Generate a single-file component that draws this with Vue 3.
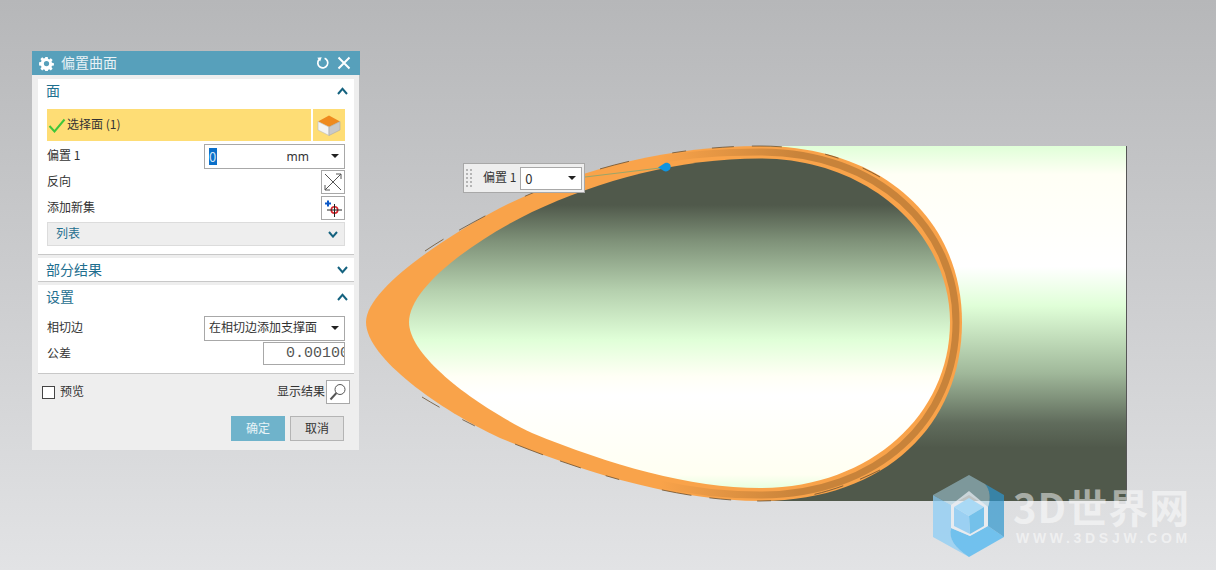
<script setup>
const outerD = 'M366 322C366 290 440 240 500 208C580 168 670 146 760 146C885 146 962 222 962 322C962 425 885 501 760 501C680 501 590 475 500 438C440 410 366 358 366 322Z'
const innerD = 'M409 322C409 290 465 245 532 212C600 180 680 158.5 760 158.5C870 158.5 950 235 950 322C950 415 870 488 760 488C690 488 610 465 532 433C480 408 409 358 409 322Z'
const ringD = 'M660 160C690 154 725 152 760 152C878 152 956 228 956 322C956 420 878 495 760 495C725 495 690 491 660 484'
const dashTop = 'M425 251C447 236 472 223 500 208C580 168 670 146 760 146C800 146 840 154 880 177'
const dashBottom = 'M880 470C840 490 800 501 760 501C680 501 590 475 500 438C470 424 445 411 422 397'
</script>

<template>
  <div class="page">
    <svg class="scene" width="1216" height="570" viewBox="0 0 1216 570">
      <defs>
        <linearGradient id="tube" gradientUnits="userSpaceOnUse" x1="0" y1="146" x2="0" y2="501">
          <stop offset="0" stop-color="#e0ffd8" />
          <stop offset="0.08" stop-color="#fffff5" />
          <stop offset="0.34" stop-color="#ffffff" />
          <stop offset="0.45" stop-color="#e0ffd8" />
          <stop offset="0.64" stop-color="#a0b89a" />
          <stop offset="0.78" stop-color="#606c5c" />
          <stop offset="0.85" stop-color="#50594b" />
          <stop offset="1" stop-color="#50594b" />
        </linearGradient>
        <linearGradient id="bore" gradientUnits="userSpaceOnUse" x1="0" y1="159" x2="0" y2="488">
          <stop offset="0" stop-color="#50594b" />
          <stop offset="0.14" stop-color="#50594b" />
          <stop offset="0.25" stop-color="#7f9279" />
          <stop offset="0.4" stop-color="#b5d0ae" />
          <stop offset="0.55" stop-color="#e0ffd8" />
          <stop offset="0.66" stop-color="#fffff5" />
          <stop offset="0.72" stop-color="#ffffff" />
          <stop offset="0.96" stop-color="#fffff2" />
          <stop offset="1" stop-color="#e8ffe0" />
        </linearGradient>
        <linearGradient id="band" gradientUnits="userSpaceOnUse" x1="660" y1="0" x2="800" y2="0">
          <stop offset="0" stop-color="#f9a34a" />
          <stop offset="1" stop-color="#c8833a" />
        </linearGradient>
      </defs>
      <rect x="760" y="146" width="366" height="355" fill="url(#tube)" />
      <rect x="1126" y="146" width="1" height="355" fill="#555" />
      <path :d="outerD" fill="#f9a34a" />
      <path :d="ringD" fill="none" stroke="url(#band)" stroke-width="7" />
      <path :d="innerD" fill="url(#bore)" />
      <path class="dashes" :d="dashTop" />
      <path class="dashes" :d="dashBottom" />
      <path d="M585 177L660 168" stroke="#9aa56a" stroke-width="1" fill="none" />
      <path d="M658 167.5L665 163C669 162 671.5 165 670.5 168C669.5 171 666 172 664 171Z" fill="#0f94e0" />

      <g>
        <path d="M933 495V537L969 557C955 548 948 538 951 528V505Z" fill="rgb(140,205,245)" fill-opacity=".75" />
        <path d="M951 528L970 536L988 526L1004 537L969 557C955 548 948 538 951 528Z" fill="rgb(85,185,240)" fill-opacity=".8" />
        <path d="M985 484L1004 495V537L988 526V507C991 498 990 490 985 484Z" fill="rgb(45,150,205)" fill-opacity=".7" />
        <path d="M933 495L969 475L985 484C990 490 991 498 988 507L969 495L951 505Z" fill="rgb(170,215,235)" fill-opacity=".5" />
        <path d="M969 491L988 507V526L970 536L951 528V505Z" fill="rgb(235,240,245)" fill-opacity=".7" />
        <path d="M969 498L984 507L969 516L954 507Z" fill="#a9d9f5" />
        <path d="M954 507L969 516L970 534L954 526Z" fill="#9bd0f2" />
        <path d="M984 507L969 516L970 534L984 526Z" fill="#74c1ea" />
      </g>
    </svg>

    <section class="dialog">
      <header class="titlebar">
        <svg class="gear" width="15" height="15" viewBox="0 0 16 16">
          <path fill="#fff" fill-rule="evenodd" d="M6.7 1h2.6l.3 2 1.3.6 1.7-1.2 1.9 1.9-1.2 1.7.6 1.3 2 .3v2.6l-2 .3-.6 1.3 1.2 1.7-1.9 1.9-1.7-1.2-1.3.6-.3 2H6.7l-.3-2-1.3-.6-1.7 1.2-1.9-1.9 1.2-1.7-.6-1.3-2-.3V6.6l2-.3.6-1.3-1.2-1.7 1.9-1.9 1.7 1.2 1.3-.6zM8 5.2a2.8 2.8 0 1 0 0 5.6 2.8 2.8 0 0 0 0-5.6z" />
        </svg>
        <span class="title">偏置曲面</span>
        <svg class="tool" width="14" height="14" viewBox="0 0 14 14">
          <path d="M8.6 2.2A5 5 0 1 1 3 3.6" fill="none" stroke="#fff" stroke-width="1.7" />
          <path d="M1.6 1.4L6 1.6 3.6 5.6Z" fill="#fff" transform="rotate(-12 3.6 3)" />
        </svg>
        <svg width="14" height="14" viewBox="0 0 14 14">
          <path d="M1.5 1.5L12.5 12.5M12.5 1.5L1.5 12.5" stroke="#fff" stroke-width="2" />
        </svg>
      </header>

      <div class="body">
        <div class="card first">
          <div class="cardhead">
            <span>面</span>
            <svg class="chev" width="11" height="8" viewBox="0 0 11 8"><path d="M1 7L5.5 1.8 10 7" /></svg>
          </div>
          <div class="rows">
            <div class="pick">
              <div class="pickmain">
                <svg width="18" height="15" viewBox="0 0 18 15">
                  <path d="M1.5 8L6.5 13.5 16.5 1.5" fill="none" stroke="#3fc63a" stroke-width="2" />
                </svg>
                <span class="lift">选择面 (1)</span>
              </div>
              <div class="pickicon">
                <svg width="24" height="24" viewBox="0 0 24 24">
                  <path d="M12 2.5L23 8.5 12 14 1 8.5Z" fill="#ef8a1e" />
                  <path d="M1 8.5L12 14V22.5L1 17Z" fill="#f4f4f4" stroke="#bbb" stroke-width=".6" />
                  <path d="M23 8.5L12 14V22.5L23 17Z" fill="#c9c9c9" stroke="#aaa" stroke-width=".6" />
                </svg>
              </div>
            </div>

            <div class="row h26 offset">
              <span class="lift">偏置 1</span>
              <div class="field wide">
                <span class="sel">0</span>
                <span class="unit">mm</span>
                <i class="caret"></i>
              </div>
            </div>

            <div class="row h26">
              <span class="lift">反向</span>
              <button class="iconbtn" type="button">
                <svg width="20" height="20" viewBox="0 0 20 20">
                  <path d="M2 18L18 2M2 2L18 18" stroke="#555" stroke-width="1" fill="none" />
                  <path d="M13 2H18V7M2 13V18H7" stroke="#555" stroke-width="1" fill="none" />
                </svg>
              </button>
            </div>

            <div class="row h26">
              <span class="lift">添加新集</span>
              <button class="iconbtn" type="button">
                <svg width="20" height="20" viewBox="0 0 20 20">
                  <path d="M2 5.5H8M5 2.5V8.5" stroke="#0a58c8" stroke-width="2" />
                  <circle cx="11.5" cy="12" r="3.2" fill="none" stroke="#d9232a" stroke-width="1.6" />
                  <path d="M4 12H19M11.5 6V19" stroke="#222" stroke-width="1" />
                </svg>
              </button>
            </div>

            <div class="listbar">
              <span class="lift">列表</span>
              <svg class="chev" width="10" height="7" viewBox="0 0 10 7"><path d="M1 1L5 5.6 9 1" /></svg>
            </div>
          </div>
        </div>

        <div class="card second">
          <div class="cardhead">
            <span>部分结果</span>
            <svg class="chev" width="11" height="8" viewBox="0 0 11 8"><path d="M1 1L5.5 6.2 10 1" /></svg>
          </div>
        </div>

        <div class="card third">
          <div class="cardhead">
            <span>设置</span>
            <svg class="chev" width="11" height="8" viewBox="0 0 11 8"><path d="M1 7L5.5 1.8 10 7" /></svg>
          </div>
          <div class="rows">
            <div class="row r25">
              <span class="lift">相切边</span>
              <div class="field wide">
                <span class="seltext lift">在相切边添加支撑面</span>
                <i class="caret"></i>
              </div>
            </div>
            <div class="row r23">
              <span class="lift">公差</span>
              <div class="tol">0.00100</div>
            </div>
          </div>
        </div>

        <div class="foot">
          <div class="preview">
            <span class="check"></span>
            <span class="lift">预览</span>
          </div>
          <div class="result">
            <span class="lift">显示结果</span>
            <button class="iconbtn" type="button">
              <svg width="20" height="20" viewBox="0 0 20 20">
                <circle cx="12" cy="7.5" r="5" fill="none" stroke="#555" stroke-width="1" />
                <path d="M8.4 11L2.5 17.5" stroke="#555" stroke-width="2" />
              </svg>
            </button>
          </div>
        </div>

        <div class="actions">
          <button class="btn primary" type="button"><span class="lift">确定</span></button>
          <button class="btn" type="button"><span class="lift">取消</span></button>
        </div>
      </div>
    </section>

    <div class="float">
      <div class="grip"><i v-for="n in 10" :key="n"></i></div>
      <span class="floatlabel lift">偏置 1</span>
      <div class="floatfield">
        <span>0</span>
        <i class="caret"></i>
      </div>
    </div>

    <div class="wm">
      <div class="wmtitle">3D世界网</div>
      <div class="wmurl">WWW.3DSJW.COM</div>
    </div>
  </div>
</template>

<style scoped>
.page {
  position: relative;
  width: 1216px;
  height: 570px;
  overflow: hidden;
  background: linear-gradient(180deg, #b6b7b9 0%, #e2e3e5 100%);
  font-family: "Noto Sans CJK SC", "Noto Sans", sans-serif;
  font-size: 12px;
  color: #333;
}
.scene {
  position: absolute;
  left: 0;
  top: 0;
}
.dashes {
  fill: none;
  stroke: #6a4f2f;
  stroke-width: 0.8;
  stroke-dasharray: 22 18 30 44 14 26;
}
.lift {
  display: inline-block;
  padding-bottom: 3px;
}
.dialog {
  position: absolute;
  left: 32px;
  top: 51px;
  width: 328px;
  display: flex;
  flex-direction: column;
}
.titlebar {
  height: 24px;
  background: #57a0bb;
  display: flex;
  align-items: center;
  padding: 0 9px 0 7px;
  color: #e8f2f6;
  font-size: 14px;
}
.gear { flex: none; }
.title {
  margin-left: 7px;
  flex: 1;
  padding-bottom: 3px;
}
.tool { margin-right: 7px; }
.body {
  width: 327px;
  height: 375px;
  background: #eeeeee;
  padding: 4px 5px 0 6px;
  box-sizing: border-box;
  display: flex;
  flex-direction: column;
}
.card {
  background: #fff;
  border-bottom: 1px solid #c8c8c8;
  box-sizing: border-box;
  padding: 0 9px;
}
.first { height: 176px; margin-bottom: 3px; }
.second { height: 24px; margin-bottom: 3px; }
.third { height: 89px; }
.cardhead {
  height: 24px;
  display: flex;
  align-items: center;
  justify-content: space-between;
  color: #1f6f8f;
  font-size: 14px;
  margin-right: -3px;
  margin-left: -1px;
}
.cardhead > span { padding-bottom: 3px; }
.first .cardhead { margin-bottom: 6px; }
.third .cardhead { margin-bottom: 6px; }
.chev path {
  fill: none;
  stroke: #14627f;
  stroke-width: 2;
}
.rows {
  display: flex;
  flex-direction: column;
}
.pick {
  display: flex;
  height: 32px;
  gap: 2px;
}
.pickmain {
  flex: 1;
  background: #fedd75;
  display: flex;
  align-items: center;
  padding-left: 1px;
  gap: 1px;
}
.pickicon {
  width: 32px;
  background: #fedd75;
  display: flex;
  align-items: center;
  justify-content: center;
}
.row {
  display: flex;
  align-items: center;
  justify-content: space-between;
}
.h26 { height: 26px; }
.offset { margin-top: 2px; }
.r25 { height: 26px; }
.r23 { height: 25px; }
.field {
  width: 141px;
  height: 25px;
  box-sizing: border-box;
  border: 1px solid #a8a8a8;
  background: #fff;
  display: flex;
  align-items: center;
  padding: 0 5px 0 4px;
}
.sel {
  background: #0a6fc9;
  color: #cfe4f6;
  width: 8px;
  height: 17px;
  line-height: 17px;
  font-size: 13px;
}
.unit {
  margin-left: auto;
  margin-right: 22px;
  font-family: "Noto Sans", sans-serif;
}
.seltext {
  flex: 1;
  white-space: nowrap;
}
.caret {
  width: 0;
  height: 0;
  border-left: 4px solid transparent;
  border-right: 4px solid transparent;
  border-top: 4px solid #222;
  flex: none;
}
.iconbtn {
  width: 24px;
  height: 24px;
  box-sizing: border-box;
  padding: 0;
  border: 1px solid #a8a8a8;
  background: #fff;
  display: flex;
  align-items: center;
  justify-content: center;
}
.listbar {
  margin-top: 1px;
  height: 24px;
  box-sizing: border-box;
  border: 1px solid #dcdcdc;
  background: #eeeeee;
  display: flex;
  align-items: center;
  justify-content: space-between;
  padding: 0 6px 0 8px;
  color: #1f6f8f;
}
.tol {
  width: 82px;
  height: 23px;
  box-sizing: border-box;
  border: 1px solid #a8a8a8;
  background: #fff;
  overflow: hidden;
  white-space: nowrap;
  padding-left: 22px;
  font-family: "Liberation Mono", monospace;
  font-size: 15px;
  line-height: 22px;
  color: #555;
}
.foot {
  height: 24px;
  margin-top: 6px;
  display: flex;
  align-items: center;
  justify-content: space-between;
  padding-left: 4px;
  margin-right: 4px;
}
.preview {
  display: flex;
  align-items: center;
  gap: 5px;
}
.check {
  width: 13px;
  height: 13px;
  border: 1px solid #444;
  background: #fff;
  display: block;
  box-sizing: border-box;
}
.result {
  display: flex;
  align-items: center;
  gap: 1px;
}
.actions {
  display: flex;
  justify-content: flex-end;
  gap: 5px;
  margin-top: 12px;
  padding-right: 10px;
}
.btn {
  width: 54px;
  height: 25px;
  box-sizing: border-box;
  padding: 0;
  border: 1px solid #b4b4b4;
  background: #e1e1e1;
  color: #333;
  font: inherit;
}
.primary {
  background: #6fb3cb;
  border-color: #6fb3cb;
  color: #e8f4f8;
}
.float {
  position: absolute;
  left: 463px;
  top: 163px;
  width: 122px;
  height: 30px;
  box-sizing: border-box;
  border: 1px solid #a8a8a8;
  background: #eeeeee;
  display: flex;
  align-items: center;
}
.grip {
  width: 6px;
  margin-left: 2px;
  display: grid;
  grid-template-columns: 2px 2px;
  gap: 2px;
}
.grip i {
  width: 2px;
  height: 2px;
  background: #b5b5b5;
}
.floatlabel {
  margin-left: 11px;
  white-space: nowrap;
}
.floatfield {
  margin-left: 4px;
  width: 62px;
  height: 23px;
  box-sizing: border-box;
  border: 1px solid #a8a8a8;
  background: #fff;
  display: flex;
  align-items: center;
  justify-content: space-between;
  padding: 0 5px 0 4px;
  font-size: 13px;
}
.wm {
  position: absolute;
  left: 1013px;
  top: 483px;
  width: 190px;
  color: rgba(255, 255, 255, 0.5);
}
.wmtitle {
  font-family: "Noto Sans CJK SC", sans-serif;
  font-weight: 700;
  font-size: 40px;
  line-height: 46px;
  white-space: nowrap;
  letter-spacing: 1px;
}
.wmurl {
  font-family: "Liberation Sans", sans-serif;
  font-weight: 700;
  font-size: 14px;
  line-height: 14px;
  margin-top: 2px;
  margin-left: 3px;
  letter-spacing: 3.7px;
  white-space: nowrap;
}
</style>
